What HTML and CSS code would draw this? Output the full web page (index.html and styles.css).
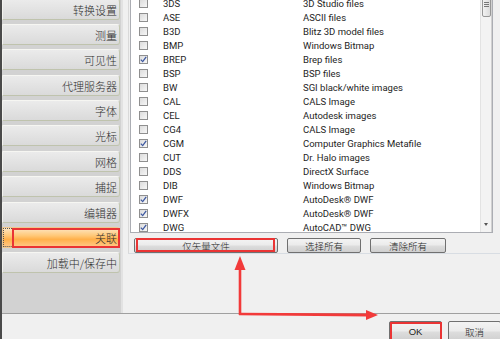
FILE: index.html
```html
<!DOCTYPE html>
<html lang="zh-CN">
<head>
<meta charset="utf-8">
<title>关联</title>
<link rel="stylesheet" href="styles.css">
</head>
<body>
<div class="app">
  <div class="top">
    <nav class="sidebar">
      <div class="nav-list">
        <div class="nav-item">转换设置</div>
        <div class="nav-item">测量</div>
        <div class="nav-item">可见性</div>
        <div class="nav-item">代理服务器</div>
        <div class="nav-item">字体</div>
        <div class="nav-item">光标</div>
        <div class="nav-item">网格</div>
        <div class="nav-item">捕捉</div>
        <div class="nav-item">编辑器</div>
        <div class="nav-item active">关联</div>
        <div class="nav-item">加载中/保存中</div>
      </div>
    </nav>
    <section class="main">
      <div class="group">
        <div class="listbox">
          <div class="rows">
            <div class="row"><span class="cb"></span><span class="ext">3DS</span><span class="desc">3D Studio files</span></div>
            <div class="row"><span class="cb"></span><span class="ext">ASE</span><span class="desc">ASCII files</span></div>
            <div class="row"><span class="cb"></span><span class="ext">B3D</span><span class="desc">Blitz 3D model files</span></div>
            <div class="row"><span class="cb"></span><span class="ext">BMP</span><span class="desc">Windows Bitmap</span></div>
            <div class="row"><span class="cb checked"><svg viewBox="0 0 7 7" width="7" height="7"><path d="M0.8 3.6 L2.7 5.6 L6.2 0.8" fill="none" stroke="#3d58a0" stroke-width="1.3"/></svg></span><span class="ext">BREP</span><span class="desc">Brep files</span></div>
            <div class="row"><span class="cb"></span><span class="ext">BSP</span><span class="desc">BSP files</span></div>
            <div class="row"><span class="cb"></span><span class="ext">BW</span><span class="desc">SGI black/white images</span></div>
            <div class="row"><span class="cb"></span><span class="ext">CAL</span><span class="desc">CALS Image</span></div>
            <div class="row"><span class="cb"></span><span class="ext">CEL</span><span class="desc">Autodesk images</span></div>
            <div class="row"><span class="cb"></span><span class="ext">CG4</span><span class="desc">CALS Image</span></div>
            <div class="row"><span class="cb checked"><svg viewBox="0 0 7 7" width="7" height="7"><path d="M0.8 3.6 L2.7 5.6 L6.2 0.8" fill="none" stroke="#3d58a0" stroke-width="1.3"/></svg></span><span class="ext">CGM</span><span class="desc">Computer Graphics Metafile</span></div>
            <div class="row"><span class="cb"></span><span class="ext">CUT</span><span class="desc">Dr. Halo images</span></div>
            <div class="row"><span class="cb"></span><span class="ext">DDS</span><span class="desc">DirectX Surface</span></div>
            <div class="row"><span class="cb"></span><span class="ext">DIB</span><span class="desc">Windows Bitmap</span></div>
            <div class="row"><span class="cb checked"><svg viewBox="0 0 7 7" width="7" height="7"><path d="M0.8 3.6 L2.7 5.6 L6.2 0.8" fill="none" stroke="#3d58a0" stroke-width="1.3"/></svg></span><span class="ext">DWF</span><span class="desc">AutoDesk® DWF</span></div>
            <div class="row"><span class="cb checked"><svg viewBox="0 0 7 7" width="7" height="7"><path d="M0.8 3.6 L2.7 5.6 L6.2 0.8" fill="none" stroke="#3d58a0" stroke-width="1.3"/></svg></span><span class="ext">DWFX</span><span class="desc">AutoDesk® DWF</span></div>
            <div class="row"><span class="cb checked"><svg viewBox="0 0 7 7" width="7" height="7"><path d="M0.8 3.6 L2.7 5.6 L6.2 0.8" fill="none" stroke="#3d58a0" stroke-width="1.3"/></svg></span><span class="ext">DWG</span><span class="desc">AutoCAD™ DWG</span></div>
          </div>
          <div class="scrollbar">
            <div class="thumb"><span class="grip"></span></div>
            <div class="down"></div>
          </div>
        </div>
        <div class="btn-row">
          <button class="btn b-vector marked">仅矢量文件</button>
          <button class="btn b-all">选择所有</button>
          <button class="btn b-clear">清除所有</button>
        </div>
      </div>
    </section>
  </div>
  <footer class="bottom">
    <button class="btn dlg ok marked">OK</button>
    <button class="btn dlg">取消</button>
  </footer>
  <svg class="arrows" width="500" height="339" viewBox="0 0 500 339">
    <line x1="240" y1="267" x2="240" y2="315" stroke="#f23a3a" stroke-width="2.6"/>
    <polygon points="240,256 234.5,270 245.5,270" fill="#f23a3a"/>
    <polygon points="239,312.8 368,313.4 368,316.6 239,315.2" fill="#f23a3a"/>
    <polygon points="378,315 366,310 366,320" fill="#f23a3a"/>
  </svg>
</div>
</body>
</html>
```
FILE: styles.css
```css
* { box-sizing: border-box; }
html, body { margin: 0; padding: 0; }
body {
  width: 500px;
  height: 339px;
  overflow: hidden;
  background: #f0f0f0;
  font-family: "Noto Sans CJK SC", sans-serif;
}
.app {
  position: relative;
  width: 500px;
  height: 339px;
  border-left: 2px solid #4a4a4a;
}
.top {
  display: flex;
  height: 313px;
}
.sidebar {
  width: 121px;
  background: #d2d2d2;
  border-right: 2px solid #e2e2e2;
  overflow: hidden;
}
.nav-list {
  display: flex;
  flex-direction: column;
  gap: 4.4px;
  margin-top: -1.5px;
}
.nav-item {
  position: relative;
  width: 118px;
  height: 21px;
  line-height: 20px;
  text-align: right;
  padding-right: 2px;
  font-size: 11px;
  font-weight: 300;
  color: #2e2e2e;
  background: linear-gradient(#ebebeb, #dadada);
  border: 1px solid;
  border-color: #f6f6f2 #c4c8b2 #bfc3ad #f2f2ee;
  border-radius: 0 3px 3px 0;
}
.nav-item.active {
  background: linear-gradient(#fde6c4 0%, #ffc878 40%, #ffb04a 60%, #ffc98a 100%);
  border-color: #f0c890;
  outline: 1px dotted #555;
  outline-offset: -2px;
}
.nav-item.active::after {
  content: "";
  position: absolute;
  left: 9px;
  right: -1px;
  top: 0;
  bottom: -1px;
  border: 2px solid #ea3434;
}
.main {
  flex: 1;
  padding-left: 5px;
  overflow: hidden;
}
.group {
  height: 259px;
  border-left: 1px solid #d9d9d9;
  border-bottom: 1px solid #d8dde3;
  padding-left: 1px;
}
.listbox {
  position: relative;
  width: 363px;
  height: 238px;
  margin-top: -5px;
  background: #fff;
  border: 1px solid #abadb3;
  overflow: hidden;
}
.rows {
  font-family: Roboto, "Liberation Sans", sans-serif;
  font-size: 9.5px;
  color: #1e1e1e;
}
.row {
  display: flex;
  align-items: center;
  height: 14px;
  padding-left: 8px;
}
.cb {
  display: flex;
  align-items: center;
  justify-content: center;
  width: 9px;
  height: 9px;
  border: 1px solid #8f8f8f;
  background: linear-gradient(135deg, #dcdcdc, #f7f7f7);
}
.cb svg { display: block; }
.ext {
  width: 140px;
  margin-left: 15px;
}
.desc { white-space: nowrap; }
.scrollbar {
  position: absolute;
  top: 0;
  right: 0;
  bottom: 0;
  width: 12px;
  background: #f3f3f3;
  border-left: 1px solid #e3e3e3;
  border-right: 1px solid #d0d0d0;
}
.thumb {
  position: absolute;
  top: -1px;
  left: 1px;
  width: 9px;
  height: 22px;
  border: 1px solid #979797;
  border-radius: 2px;
  background: linear-gradient(90deg, #f2f2f2, #dcdcdc);
  display: flex;
  align-items: center;
  justify-content: center;
}
.grip {
  width: 5px;
  height: 5px;
  margin-top: -4px;
  border-top: 1px solid #777;
  border-bottom: 1px solid #777;
  background: linear-gradient(transparent 40%, #777 40%, #777 60%, transparent 60%);
}
.down {
  position: absolute;
  bottom: 6px;
  left: 3px;
  width: 0;
  height: 0;
  border-left: 2.5px solid transparent;
  border-right: 2.5px solid transparent;
  border-top: 3px solid #555;
}
.btn-row {
  display: flex;
  gap: 9px;
  margin-top: 5px;
  padding-left: 4px;
}
.btn {
  position: relative;
  height: 15px;
  padding: 0;
  font-family: "Noto Sans CJK SC", sans-serif;
  font-size: 9.5px;
  font-weight: 300;
  line-height: 12px;
  color: #1e1e1e;
  border: 1px solid #707070;
  border-radius: 2px;
  background: linear-gradient(#f3f3f3 0%, #ebebeb 48%, #dddddd 52%, #cfcfcf 100%);
}
.b-vector { width: 144px; }
.b-all { width: 74px; }
.b-clear { width: 76px; }
.btn.marked::after {
  content: "";
  position: absolute;
  left: 1px;
  right: 2px;
  top: -1px;
  bottom: 0;
  border: 2px solid #ea3434;
}
.bottom {
  display: flex;
  justify-content: flex-end;
  gap: 7px;
  height: 26px;
  padding-top: 7px;
  border-top: 1px solid #a0a0a0;
  background: #f0f0f0;
}
.btn.dlg {
  width: 53px;
  height: 21px;
  line-height: 16px;
  margin-right: -1px;
}
.btn.ok {
  font-family: "Liberation Sans", sans-serif;
  font-weight: 400;
  font-size: 9.5px;
}
.btn.ok.marked::after {
  left: 0;
  right: -1px;
  top: 0;
  bottom: -1px;
}
.arrows {
  position: absolute;
  top: 0;
  left: -2px;
  pointer-events: none;
}
```
